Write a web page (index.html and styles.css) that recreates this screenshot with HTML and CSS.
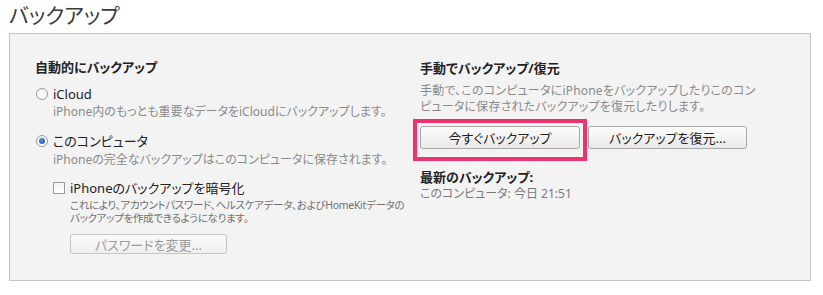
FILE: index.html
```html
<!DOCTYPE html>
<html lang="ja">
<head>
  <meta charset="UTF-8">
  <title>バックアップ</title>
  <link rel="stylesheet" href="styles.css">
</head>
<body>
  <h1 class="title">バックアップ</h1>
  <div class="panel">
    <div class="col col-auto">
      <div class="heading">自動的にバックアップ</div>
      <div class="option option-first">
        <span class="radio"></span>
        <span class="label">iCloud</span>
      </div>
      <div class="desc">iPhone内のもっとも重要なデータをiCloudにバックアップします。</div>
      <div class="option option-second">
        <span class="radio checked"></span>
        <span class="label">このコンピュータ</span>
      </div>
      <div class="desc desc-second">iPhoneの完全なバックアップはこのコンピュータに保存されます。</div>
      <div class="check-row">
        <span class="checkbox"></span>
        <span class="label">iPhoneのバックアップを暗号化</span>
      </div>
      <div class="note">これにより、アカウントパスワード、ヘルスケアデータ、およびHomeKitデータの<br>バックアップを作成できるようになります。</div>
      <button class="btn btn-disabled">パスワードを変更...</button>
    </div>
    <div class="col col-manual">
      <div class="heading">手動でバックアップ/復元</div>
      <div class="desc desc-manual">手動で、このコンピュータにiPhoneをバックアップしたりこのコン<br>ピュータに保存されたバックアップを復元したりします。</div>
      <div class="btn-row">
        <button class="btn btn-now">今すぐバックアップ</button>
        <button class="btn btn-restore">バックアップを復元...</button>
      </div>
      <div class="latest-title">最新のバックアップ:</div>
      <div class="latest-value">このコンピュータ: 今日 21:51</div>
    </div>
  </div>
</body>
</html>
```

FILE: styles.css
```css
body {
  margin: 0;
  background-color: #fff;
  font-family: "Noto Sans", "Noto Sans CJK JP", sans-serif;
  font-feature-settings: "palt";
  color: #222;
  font-size: 12px;
}

.title {
  margin: 0;
  padding-left: 9px;
  font-size: 21px;
  font-weight: 400;
  line-height: 30px;
  height: 32px;
  color: #3a3a3a;
}

.panel {
  box-sizing: border-box;
  margin: 1px 0 0 9px;
  width: 802px;
  height: 248px;
  border: 1px solid #c4c4c4;
  background-color: #f3f3f3;
  padding: 24px 0 0 25px;
  display: flex;
}

.col-auto {
  width: 385px;
}

.heading {
  font-size: 13px;
  font-weight: bold;
  line-height: 18px;
  color: #222;
}

.option {
  display: flex;
  align-items: center;
  gap: 5px;
  line-height: 18px;
  margin-top: 9px;
  font-size: 13px;
}

.option-second {
  margin-top: 11px;
}

.radio {
  box-sizing: border-box;
  width: 12px;
  height: 12px;
  border: 1px solid #9a9a9a;
  border-radius: 50%;
  background: linear-gradient(#f4f4f4, #fff);
  margin-left: 1px;
  display: flex;
  align-items: center;
  justify-content: center;
}

.radio.checked::after {
  content: "";
  width: 6px;
  height: 6px;
  border-radius: 50%;
  background: radial-gradient(circle at 40% 35%, #5b8fd6, #1f4f9a);
}

.desc {
  padding-left: 18px;
  line-height: 18px;
  color: #8a8a8a;
}

.desc-second {
  margin-top: 1px;
}

.check-row {
  display: flex;
  align-items: center;
  gap: 5px;
  margin: 10px 0 0 18px;
  line-height: 18px;
  font-size: 13px;
}

.checkbox {
  box-sizing: border-box;
  width: 12px;
  height: 12px;
  border: 1px solid #9a9a9a;
  background: linear-gradient(#f2f2f2, #fff);
}

.note {
  margin: 2px 0 0 35px;
  font-size: 10.5px;
  line-height: 13px;
  color: #707070;
  letter-spacing: -0.3px;
}

.btn {
  box-sizing: border-box;
  height: 23px;
  border: 1px solid #a9a9a9;
  border-radius: 3px;
  background: linear-gradient(#fdfdfd, #e9e9e9);
  font-family: inherit;
  font-feature-settings: "palt";
  font-size: 13px;
  color: #222;
  padding: 0;
}

.btn-disabled {
  display: block;
  margin: 9px 0 0 35px;
  width: 157px;
  height: 20px;
  color: #9a9a9a;
  border-color: #c6c6c6;
  background: linear-gradient(#fafafa, #efefef);
}

.col-manual {
  padding-top: 1px;
}

.desc-manual {
  padding-left: 0;
  line-height: 16px;
  margin-top: 6px;
  letter-spacing: 0.2px;
}

.btn-row {
  display: flex;
  gap: 8px;
  margin-top: 11px;
}

.btn-now {
  width: 160px;
  position: relative;
}

/* pink highlight drawn over the button */
.btn-now::after {
  content: "";
  position: absolute;
  left: -8px;
  top: -8px;
  right: -8px;
  bottom: -13px;
  border: 4px solid #eb336e;
}

.btn-restore {
  width: 159px;
}

.latest-title {
  margin-top: 20px;
  font-size: 13px;
  font-weight: bold;
  line-height: 16px;
}

.latest-value {
  margin-top: 1px;
  line-height: 16px;
  color: #7a7a7a;
}
```
